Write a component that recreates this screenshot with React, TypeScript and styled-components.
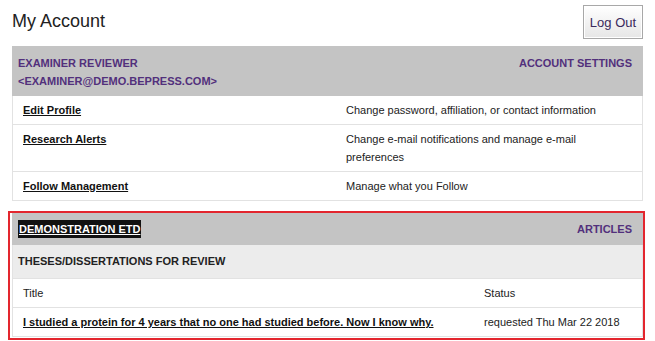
import styled, { createGlobalStyle } from "styled-components";

const GlobalStyle = createGlobalStyle`
  html, body {
    margin: 0;
    padding: 0;
    background: #fff;
  }
  body {
    font-family: "Liberation Sans", Arial, sans-serif;
    color: #222;
  }
`;

const Page = styled.div`
  padding: 0 12px;
`;

const TopBar = styled.div`
  display: flex;
  align-items: flex-start;
  justify-content: space-between;
  height: 46px;
`;

const Title = styled.h1`
  margin: 11px 0 0;
  font-size: 18px;
  line-height: 21px;
  font-weight: normal;
  color: #222;
`;

const LogOutButton = styled.button`
  height: 34px;
  width: 60px;
  margin-top: 5px;
  border: 1px solid #a8a8a8;
  box-shadow: inset 0 0 0 1px #fff;
  background: linear-gradient(#ffffff, #e6e6e6);
  font-family: "Liberation Sans", Arial, sans-serif;
  font-size: 13px;
  color: #3a2a5c;
  padding: 0;
  cursor: pointer;
`;

const HeaderBar = styled.div<{ $tall?: boolean }>`
  display: flex;
  justify-content: space-between;
  align-items: ${(p) => (p.$tall ? "flex-start" : "center")};
  background: #c4c4c4;
  height: ${(p) => (p.$tall ? "50px" : "32px")};
  padding: ${(p) => (p.$tall ? "8px 11px 0 6px" : "0 11px 0 6px")};
  box-sizing: border-box;
  font-size: 11px;
  font-weight: bold;
  line-height: 18px;
  color: #52307c;
`;

const HeaderLink = styled.span`
  color: #52307c;
`;

const Highlight = styled.span`
  background: #111;
  color: #fff;
  text-decoration: underline;
  padding: 0 1px;
`;

const Row = styled.div<{ $cols: string; $shade?: boolean }>`
  display: grid;
  grid-template-columns: ${(p) => p.$cols};
  border-left: 1px solid #e2e2e2;
  border-right: 1px solid #e2e2e2;
  border-bottom: 1px solid #e2e2e2;
  background: ${(p) => (p.$shade ? "#ececec" : "#fff")};
  font-size: 11px;
  line-height: 18px;
`;

const Cell = styled.div<{ $pad?: string }>`
  padding: ${(p) => p.$pad ?? "5px 10px"};
`;

const RowLink = styled.a`
  color: #111;
  font-weight: bold;
  text-decoration: underline;
`;

const SectionLabel = styled.div`
  padding: 7px 5px 8px;
  font-weight: bold;
  color: #222;
`;

const Focused = styled.div`
  margin: 10px -2px 0 -4px;
  border: 2px solid #e3262e;
  padding: 0 0 1px 2px;
`;

const accountRows = [
  { label: "Edit Profile", text: "Change password, affiliation, or contact information" },
  { label: "Research Alerts", text: "Change e-mail notifications and manage e-mail preferences" },
  { label: "Follow Management", text: "Manage what you Follow" },
];

export default function App() {
  return (
    <Page>
      <GlobalStyle />
      <TopBar>
        <Title>My Account</Title>
        <LogOutButton>Log Out</LogOutButton>
      </TopBar>

      <HeaderBar $tall>
        <div>
          <div>EXAMINER REVIEWER</div>
          <div>&lt;EXAMINER@DEMO.BEPRESS.COM&gt;</div>
        </div>
        <HeaderLink>ACCOUNT SETTINGS</HeaderLink>
      </HeaderBar>
      {accountRows.map((r) => (
        <Row key={r.label} $cols="323px 1fr">
          <Cell>
            <RowLink href="#">{r.label}</RowLink>
          </Cell>
          <Cell $pad="5px 30px 5px 10px">{r.text}</Cell>
        </Row>
      ))}

      <Focused>
        <HeaderBar>
          <Highlight>DEMONSTRATION ETD</Highlight>
          <HeaderLink>ARTICLES</HeaderLink>
        </HeaderBar>
        <Row $cols="1fr" $shade>
          <SectionLabel>THESES/DISSERTATIONS FOR REVIEW</SectionLabel>
        </Row>
        <Row $cols="461px 1fr">
          <Cell>Title</Cell>
          <Cell>Status</Cell>
        </Row>
        <Row $cols="461px 1fr">
          <Cell>
            <RowLink href="#">
              I studied a protein for 4 years that no one had studied before. Now I know why.
            </RowLink>
          </Cell>
          <Cell>requested Thu Mar 22 2018</Cell>
        </Row>
      </Focused>
    </Page>
  );
}
